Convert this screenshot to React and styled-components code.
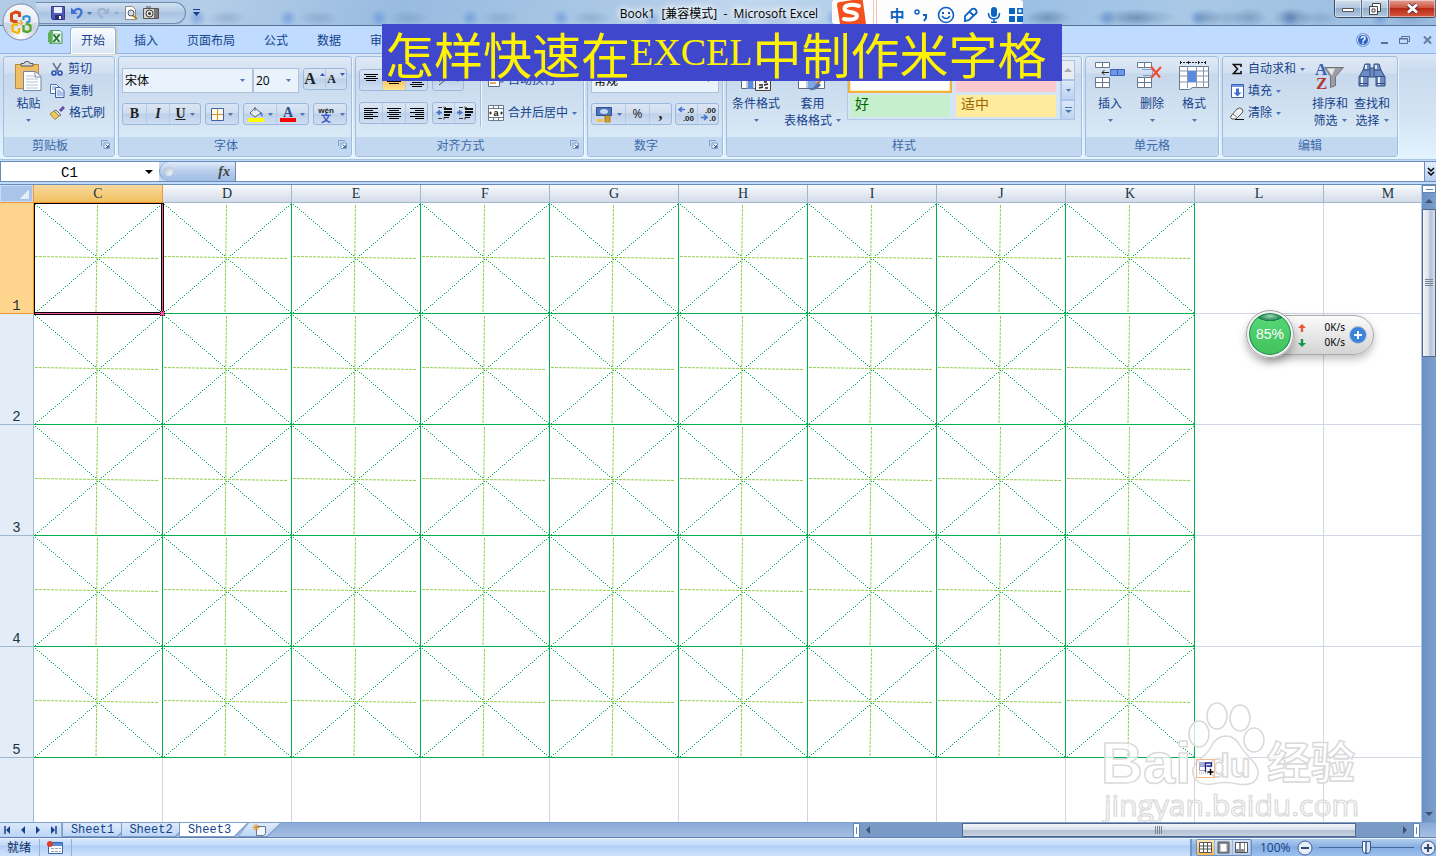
import React from "react";
import styled, { createGlobalStyle, css } from "styled-components";

const UI = `"Open Sans", "Noto Sans CJK SC", sans-serif`;
const MONO = `"Liberation Mono", "Noto Sans CJK SC", monospace`;
const INK = "#15428b";
const GREEN = "#00b050";

const Global = createGlobalStyle`
  * { box-sizing: border-box; }
  body { margin: 0; background: #fff; font: 12px/16px ${UI}; color: ${INK}; }
  button, input, select { font: inherit; color: inherit; margin: 0; }
  button { padding: 0; border: 0; background: none; cursor: default; white-space: nowrap; }
  svg { display: block; flex: none; }
`;

const Window = styled.div`
  position: relative;
  display: flex;
  flex-direction: column;
  height: 100vh;
  min-height: 480px;
  overflow: hidden;
  background: #bfdbff;
`;

/* ---------- title bar ---------- */
const TitleBar = styled.header`
  position: relative;
  display: flex;
  justify-content: center;
  height: 26px;
  flex: none;
  border-bottom: 1px solid #56708f;
  background:
    radial-gradient(ellipse 44px 9px at 79% 70%, rgba(70, 105, 145, 0.4), transparent),
    radial-gradient(ellipse 16px 9px at 84% 70%, rgba(70, 105, 145, 0.4), transparent),
    radial-gradient(ellipse 18px 10px at 87% 70%, rgba(70, 105, 145, 0.4), transparent),
    radial-gradient(ellipse 20px 10px at 90% 70%, rgba(60, 90, 130, 0.45), transparent),
    radial-gradient(ellipse 24px 9px at 73% 70%, rgba(70, 105, 145, 0.35), transparent),
    radial-gradient(circle 9px at 15px 18px, rgba(80, 135, 215, 0.5), transparent) 0 0 / 91px 26px repeat-x,
    radial-gradient(ellipse 20px 8px at 45px 18px, rgba(90, 125, 165, 0.3), transparent) 0 0 / 91px 26px repeat-x,
    linear-gradient(115deg, #b3cce6 0%, #a9c6e4 8%, #b5cde8 14%, #98bbe0 28%, #aac7e5 42%, #c0d7ee 52%, #9abfe4 70%, #a9c8e6 82%, #98bbdf 100%);
`;

const Title = styled.h1`
  margin: 0;
  padding: 5px 0 0 2px;
  font: 12px/17px ${UI};
  color: #000;
  white-space: pre;
  text-shadow: 0 0 6px #fff, 0 0 8px #fff, 0 0 10px #fff;
`;

const QuickAccess = styled.div`
  position: absolute;
  left: 36px;
  top: 2px;
  display: flex;
  align-items: center;
  gap: 5px;
  height: 22px;
  width: 150px;
  padding-left: 15px;
  border: 1px solid #6d8db4;
  border-left: 0;
  border-radius: 0 11px 11px 0;
  background: linear-gradient(#d3e1f1, #b4cae4 45%, #a9c3e2 50%, #bfd3ea);
`;

const QuickMore = styled.button`
  position: absolute;
  left: 193px;
  top: 9px;
`;

const OfficeOrb = styled.button`
  position: absolute;
  left: 2px;
  top: 3px;
  z-index: 3;
`;

const CaptionButtons = styled.div`
  position: absolute;
  right: -1px;
  top: -1px;
  display: flex;
  height: 19px;
  border: 1px solid #3b4d66;
  border-radius: 0 0 4px 4px;
  overflow: hidden;
`;

const CaptionButton = styled.button`
  display: flex;
  align-items: center;
  justify-content: center;
  width: ${(p) => (p.$close ? 47 : 27)}px;
  border-right: 1px solid #52678a;
  box-shadow: inset 0 0 0 1px rgba(255, 255, 255, 0.45);
  background: ${(p) =>
    p.$close
      ? "linear-gradient(#e0a196, #d0543f 45%, #b92a16 50%, #d4593c)"
      : "linear-gradient(#d0deec, #b2c8df 45%, #93aecd 50%, #b2cbe4)"};
`;

/* input method strip floating over the title bar */
const ImeBar = styled.div`
  position: absolute;
  left: calc(50% + 114px);
  top: 0;
  display: flex;
  align-items: center;
  gap: 8px;
  height: 24px;
  width: 191px;
  padding: 5px 0 0 4px;
  border-radius: 3px;
  background: #fdfdfe;
  color: #0a63c2;
`;

const ImeLogo = styled.div`
  margin: -4px 7px 0 0;
  padding-right: 5px;
  border-right: 1px solid #f6c4b6;
  box-shadow: 2px 0 0 #fff, 3px 0 0 #f6c4b6;
`;

const ImeMode = styled.button`
  font: bold 15px/16px ${UI};
  width: 16px;
`;

const Banner = styled.div`
  position: absolute;
  z-index: 5;
  left: calc(50% - 336px);
  top: 24px;
  display: flex;
  align-items: center;
  width: 680px;
  height: 57px;
  padding-left: 3px;
  overflow: hidden;
  background: #3f48cc;
  color: #fff200;
  font: 49px/53px "Noto Sans CJK SC", sans-serif;
  white-space: nowrap;
`;

const BannerLatin = styled.span`
  font: 38px/57px "Liberation Serif", serif;
`;

/* ---------- ribbon ---------- */
const TabStrip = styled.nav`
  position: relative;
  display: flex;
  flex: none;
  height: 27px;
  padding-left: 47px;
  background: #bfdbff;
`;

const TabIcon = styled.div`
  width: 17px;
  padding-top: 3px;
`;

const RibbonTab = styled.button`
  height: 27px;
  padding: ${(p) => (p.$active ? "0 10px" : "0 14px 0 15px")};
  margin: ${(p) => (p.$active ? "1px 3px 0 6px" : "1px 0 0")};
  line-height: 24px;
  ${(p) =>
    p.$active &&
    css`
      border: 1px solid #8db2e3;
      border-bottom: 0;
      border-radius: 4px 4px 0 0;
      background: linear-gradient(#fbfdff, #e4edf8 60%, #dae6f4);
      box-shadow: inset 0 0 0 1px #fff, 1px 0 2px #d9c27d;
      z-index: 1;
    `}
`;

const DocButtons = styled.div`
  display: flex;
  align-items: center;
  gap: 9px;
  margin-left: auto;
  padding-right: 1px;
`;

const Ribbon = styled.section`
  display: flex;
  flex: none;
  gap: 3px;
  height: 107px;
  padding: 2px 3px 4px;
  border-top: 1px solid #8db2e3;
  border-bottom: 1px solid #a7c4e2;
  background: linear-gradient(#dbe7f6, #c9daee 16%, #d3e2f3 55%, #e3f4ff);
`;

const GroupBox = styled.section`
  display: flex;
  flex-direction: column;
  flex: none;
  width: ${(p) => p.$w}px;
  height: 101px;
  border: 1px solid #9ebfdf;
  border-radius: 3px;
  box-shadow: 1px 1px 0 #eef6ff;
  background: linear-gradient(#dfe9f5, #d3e0f1 16%, #c7d8ed 17%, #d8e8f5 80%);
`;

const GroupBody = styled.div`
  display: flex;
  flex: 1;
  padding: 0 3px;
`;

const GroupLabel = styled.footer`
  position: relative;
  height: 19px;
  flex: none;
  line-height: 18px;
  text-align: center;
  padding-right: ${(p) => (p.$launch ? 18 : 0)}px;
  color: #3e6aaa;
  background: #c1d8f0;
`;

const Launcher = styled.button`
  position: absolute;
  right: 4px;
  top: 3px;
`;

const Stack = styled.div`
  display: flex;
  flex-direction: column;
  gap: ${(p) => p.$gap || 0}px;
  padding-top: ${(p) => p.$top || 0}px;
`;

const Line = styled.div`
  display: flex;
  gap: ${(p) => (p.$gap === undefined ? 4 : p.$gap)}px;
`;

const BigButton = styled.button`
  display: flex;
  flex-direction: column;
  align-items: center;
  width: ${(p) => p.$w || 42}px;
  padding-top: 4px;
  line-height: 17px;
`;

const BigIcon = styled.span`
  display: flex;
  height: 34px;
`;

const CaretSlot = styled.span`
  display: flex;
  align-items: center;
  height: 17px;
`;

const TextLine = styled.span`
  display: flex;
  align-items: center;
  gap: 4px;
`;

const SmallButton = styled.button`
  display: flex;
  align-items: center;
  gap: 4px;
  height: 22px;
`;

const IconSlot = styled.span`
  display: flex;
  justify-content: center;
  width: 14px;
`;

const EditStack = styled(Stack)`
  width: 83px;
  padding: 1px 0 0 4px;
`;

const ClipStack = styled(Stack)`
  padding-top: 1px;
`;

const ButtonSet = styled.div`
  display: flex;
  flex: none;
  height: 22px;
  border: 1px solid #9bb7db;
  border-radius: 3px;
  overflow: hidden;
  background: linear-gradient(#dbe6f4, #cfddee 45%, #bdd0e9 50%, #cfdff2);
`;

const SetButton = styled.button`
  display: flex;
  align-items: center;
  justify-content: center;
  gap: 4px;
  width: ${(p) => p.$w || 23}px;
  color: #222;
  font: ${(p) => p.$font || "inherit"};
  border-left: ${(p) => (p.$first ? 0 : 1)}px solid #b4c9e4;
  ${(p) => p.$on && "background: linear-gradient(#fbdb9d, #ffc15c 50%, #ffe68d);"}
`;

const ComboBox = styled.label`
  display: grid;
  grid-template-columns: 1fr 12px;
  align-items: center;
  width: ${(p) => p.$w}px;
  height: 25px;
  border: 1px solid #abc1de;
  background: #eaf2fb;

  svg { grid-area: 1 / 2; pointer-events: none; }
`;

const ComboSelect = styled.select`
  grid-area: 1 / 1 / 2 / 3;
  appearance: none;
  height: 23px;
  padding: 0 2px;
  border: 0;
  color: #000;
  background: none;
`;

const VRule = styled.i`
  width: 2px;
  height: 60px;
  margin: 10px 6px 0 4px;
  border-left: 1px solid #a3bfe0;
  border-right: 1px solid #eef5fd;
`;

const Gallery = styled.div`
  display: grid;
  grid-template-columns: 104px 104px;
  grid-template-rows: 31px 24px;
  gap: 1px 2px;
  width: 214px;
  height: 60px;
  margin: 3px 0 0 4px;
  padding: 1px 0;
  border: 1px solid #b0c9e8;
  background: #d6e5f5;
`;

const StyleCell = styled.button`
  margin: ${(p) => (p.$on ? "0" : "1px 2px")};
  padding: 0 5px 4px;
  text-align: left;
  font-size: 14px;
  line-height: 18px;
  color: ${(p) => p.$fg};
  background: ${(p) => p.$bg};
  ${(p) => p.$on && "border: 2px solid #f0b23c; box-shadow: inset 0 0 0 1px #fff0c0;"}
`;

const GallerySpin = styled.div`
  display: flex;
  flex-direction: column;
  width: 14px;
  height: 60px;
  margin-top: 3px;
`;

const SpinButton = styled.button`
  flex: 1;
  display: flex;
  align-items: center;
  justify-content: center;
  border: 1px solid #a9c4e8;
  background: ${(p) => (p.$off ? "#e9edf2" : "linear-gradient(#dbe8f8, #bdd3f0)")};
`;

/* ---------- formula bar ---------- */
const FormulaBar = styled.div`
  display: flex;
  flex: none;
  height: 21px;
  margin-top: 1px;
  border-top: 1px solid #6a8db8;
  border-bottom: 1px solid #6a8db8;
  background: #c9dcf4;
`;

const NameBox = styled.div`
  display: flex;
  align-items: center;
  width: 159px;
  border-left: 1px solid #6a8db8;
  background: #fff;
`;

const NameInput = styled.input`
  width: 137px;
  height: 19px;
  margin-right: 7px;
  padding: 2px 0 0;
  border: 0;
  text-align: center;
  color: #000;
  background: none;
  font: 14px/16px ${MONO};
`;

const FxPill = styled.button`
  display: flex;
  align-items: center;
  justify-content: space-between;
  width: 77px;
  padding: 0 5px 0 4px;
  border-right: 1px solid #6a8db8;
  border-left: 1px solid #7f9fc8;
  border-radius: 10px 0 0 10px;
  background: linear-gradient(#dfeafa, #b7cdeb 50%, #9fbde4);
  color: #444;
  font: italic bold 14px/17px "Liberation Serif", serif;
`;

const FxDot = styled.i`
  width: 9px;
  height: 9px;
  border-radius: 50%;
  background: radial-gradient(circle at 70% 70%, #eef2f7, #a9b8cd);
`;

const FormulaInput = styled.input`
  flex: 1;
  min-width: 0;
  border: 0;
  background: #fff;
`;

const ExpandButton = styled.button`
  display: flex;
  align-items: center;
  justify-content: center;
  width: 12px;
  border-left: 1px solid #6a8db8;
  background: linear-gradient(#e4eefb, #b4cdee);
`;

/* ---------- sheet ---------- */
const Workbook = styled.main`
  display: flex;
  flex: 1;
  min-height: 0;
  margin-top: 2px;
  border-top: 1px solid #6a8db8;
`;

const SheetPane = styled.div`
  position: relative;
  flex: 1;
  min-width: 0;
  overflow: hidden;
  background: #fff;
`;

const Sheet = styled.table`
  table-layout: fixed;
  width: 1453px;
  border-spacing: 0;
  color: #16353f;
`;

const Corner = styled.th`
  width: 34px;
  height: 18px;
  padding: 0;
  border-right: 1px solid #f29536;
  border-bottom: 1px solid #f29536;
  background: linear-gradient(135deg, transparent 52%, #e6ecf4 53%) no-repeat 19px 4px / 10px 10px, #a9c4e9;
  box-shadow: inset 0 0 0 1px #c8dcf5;
`;

const ColHead = styled.th`
  height: 18px;
  padding: 0;
  font: 14px/17px "Liberation Serif", serif;
  border-right: 1px solid ${(p) => (p.$on ? "#f29536" : "#9eb6ce")};
  border-bottom: 1px solid ${(p) => (p.$on ? "#f29536" : "#9eb6ce")};
  background: ${(p) => (p.$on ? "linear-gradient(#f9d99f, #f1c15f)" : "linear-gradient(#f9fcfd, #e6ebf3 50%, #d3dbe9)")};
`;

const RowHead = styled.th`
  height: 111px;
  padding: 0;
  vertical-align: bottom;
  font: 14px/14px ${MONO};
  border-right: 1px solid ${(p) => (p.$on ? "#f29536" : "#9eb6ce")};
  border-bottom: 1px solid ${(p) => (p.$on ? "#f29536" : "#9eb6ce")};
  background: ${(p) => (p.$on ? "#ffd58d" : "#e4ecf7")};
`;

const Cell = styled.td`
  position: relative;
  height: 111px;
  padding: 0;
  border-right: 1px solid ${(p) => (p.$ruled ? GREEN : "#d0d7e5")};
  border-bottom: 1px solid ${(p) => (p.$ruled ? GREEN : "#d0d7e5")};
`;

const Selection = styled.div`
  position: absolute;
  z-index: 2;
  inset: 0 -2px -2px 0;
  border: solid #000;
  border-width: 1px 3px 3px 1px;

  &::before {
    content: "";
    position: absolute;
    inset: 0 -2px -2px 0;
    border: solid #ff4fa0;
    border-width: 0 1px 1px 0;
  }

  &::after {
    content: "";
    position: absolute;
    right: -4px;
    bottom: -4px;
    width: 5px;
    height: 5px;
    background: #ff4fa0;
    outline: 1px dotted #000;
    outline-offset: -1px;
  }
`;

const FillOptions = styled.button`
  position: absolute;
  z-index: 4;
  left: calc(100% + 2px);
  top: calc(100% + 2px);
  border: 1px solid #f3b98a;
`;

/* scroll bars */
const VScroll = styled.div`
  display: flex;
  flex-direction: column;
  align-items: center;
  width: 15px;
  flex: none;
  border-left: 1px solid #a9c6ec;
  background: linear-gradient(90deg, #6c90c4, #7d9fca);
`;

const SplitBox = styled.i`
  flex: none;
  width: ${(p) => (p.$v ? 14 : 7)}px;
  height: ${(p) => (p.$v ? 8 : 15)}px;
  border: 1px solid #5f86b8;
  background: linear-gradient(#5f86b8, #5f86b8) no-repeat center / ${(p) => (p.$v ? "7px 1px" : "1px 7px")}, #fff;
`;

const ArrowButton = styled.button`
  display: flex;
  align-items: center;
  justify-content: center;
  width: 16px;
  height: 16px;
  flex: none;
  ${(p) => p.$end && "margin-top: auto;"}
`;

const VThumb = styled.button`
  display: flex;
  align-items: center;
  justify-content: center;
  width: 14px;
  height: 148px;
  border: 1px solid #52658a;
  border-radius: 1px;
  background: linear-gradient(90deg, #f3f6fa, #dbe2ec 45%, #b4c2d5 60%, #d5deea);
`;

const BottomBar = styled.div`
  display: flex;
  flex: none;
  height: 16px;
  border-top: 1px solid #7fa0cc;
  border-bottom: 1px solid #5b7fb4;
  background: linear-gradient(#8aabd8, #a5bfe2);
`;

const SheetNav = styled.div`
  display: flex;
  align-items: center;
  justify-content: space-around;
  width: 62px;
  border-right: 1px solid #8ca9d0;
  background: linear-gradient(#dbe9fb, #bcd4f3);
`;

const SheetTab = styled.button`
  position: relative;
  width: ${(p) => p.$w}px;
  margin-right: -10px;
  padding-right: ${(p) => (p.$icon ? 0 : 8)}px;
  font: 12px/15px ${MONO};
  background: #7f9dcb;
  z-index: ${(p) => (p.$active ? 2 : 1)};
  clip-path: ${(p) =>
    p.$icon
      ? "polygon(10px 0, 100% 0, calc(100% - 13px) 100%, 0 100%)"
      : "polygon(0 0, 100% 0, calc(100% - 13px) 100%, 0 100%)"};

  &::before {
    content: "";
    position: absolute;
    z-index: -1;
    inset: 0 1px 1px;
    background: ${(p) => (p.$active ? "#fff" : "linear-gradient(#dfebfb, #bcd5f5)")};
    clip-path: inherit;
  }

  svg { margin: 0 auto; }
`;

const HScroll = styled.div`
  display: flex;
  align-items: center;
  width: 39.5%;
  margin-left: auto;
  margin-right: 16px;
  background: #7a9ac6;
`;

const Track = styled.div`
  flex: 1;
  display: flex;
  justify-content: flex-end;
  padding-right: 41px;
`;

const HThumb = styled.button`
  display: flex;
  align-items: center;
  justify-content: center;
  width: 82%;
  height: 14px;
  border: 1px solid #52658a;
  background: linear-gradient(#f1f4f8, #dce3ec 45%, #b3c1d3 55%, #c9d4e3);
`;

/* ---------- status bar ---------- */
const StatusBar = styled.footer`
  display: flex;
  flex: none;
  height: 18px;
  line-height: 18px;
  border-top: 1px solid #eaf3ff;
  background: linear-gradient(#d5e5fb, #c5dcf9 35%, #b0cff5 40%, #cfe2fb);
`;

const StatusItem = styled.span`
  display: flex;
  align-items: center;
  padding: 0 8px 0 7px;
  border-right: 1px solid #8fb0de;
  color: #0c2b5e;
`;

const StatusRight = styled.div`
  display: flex;
  align-items: center;
  gap: 6px;
  width: 246px;
  margin-left: auto;
  padding-left: 4px;
  border-left: 2px solid #7196c9;
  background: linear-gradient(#b2cdf0, #86aee2 50%, #9ac0ee);
`;

const ViewButtons = styled.div`
  display: flex;
  border: 1px solid #6d90c1;
  border-radius: 2px;
  margin-right: 2px;
`;

const ViewButton = styled.button`
  padding: 1px 2px;
  border-right: 1px solid #9ab6da;
  background: ${(p) => (p.$on ? "linear-gradient(#fde9b5, #f6b84d)" : "linear-gradient(#d2e1f4, #b3cbeb)")};
`;

const ZoomSlider = styled.input`
  appearance: none;
  flex: 1;
  min-width: 0;
  height: 16px;
  margin: 0;
  background: linear-gradient(#45699c, #45699c) no-repeat center / 100% 1px;

  &::-webkit-slider-thumb {
    appearance: none;
    width: 9px;
    height: 13px;
    border: 1px solid #39598a;
    border-radius: 1px 1px 5px 5px;
    background: linear-gradient(90deg, #fff 35%, #5b7db0 35% 60%, #d6e2f2 60%);
  }
`;

/* ---------- floating pieces ---------- */
const SpeedBall = styled.aside`
  position: absolute;
  z-index: 4;
  right: 62px;
  top: 310px;
  display: flex;
  align-items: center;
  width: 128px;
  height: 50px;
`;

const Pill = styled.div`
  display: flex;
  align-items: center;
  justify-content: flex-end;
  gap: 4px;
  flex: 1;
  height: 40px;
  margin-left: 20px;
  padding-right: 6px;
  border: 1px solid #aaa;
  border-radius: 0 20px 20px 0;
  background: linear-gradient(#fbfbfb, #d4d4d4);
  box-shadow: 0 4px 8px rgba(0, 0, 0, 0.25);
`;

const Ball = styled.div`
  position: absolute;
  left: 0;
  top: 0;
  width: 48px;
  height: 48px;
  border: 3px solid #f2f2f2;
  border-radius: 50%;
  outline: 1px solid #a5a5a5;
  outline-offset: -1px;
  background: radial-gradient(ellipse 18px 7px at 50% 3px, #9fd9b0, #127d4c 70%, transparent 72%),
    linear-gradient(#58d878, #41c25c);
  box-shadow: 0 5px 8px rgba(0, 0, 0, 0.3), inset 0 0 0 1px #14824d;
  color: #fff;
  font: 14px/42px "Liberation Sans", sans-serif;
  text-align: center;
`;

const Rates = styled.div`
  width: 47px;
  color: #000;
  font: 10px/15px "Noto Sans", sans-serif;
`;

const Rate = styled.div`
  display: flex;
  align-items: center;
  justify-content: space-between;
`;

const Watermark = styled.svg`
  position: absolute;
  z-index: 3;
  right: 0;
  bottom: 0;
  pointer-events: none;
`;

/* ---------- icons ---------- */
const Caret = ({ color = "#4d76b3", w = 5 }) => (
  <svg width={w} height={w > 6 ? 4 : 3} viewBox="0 0 6 3" preserveAspectRatio="none" aria-hidden="true"><path d="M0 0h6L3 3z" fill={color} /></svg>
);

const Svg = ({ w, h = w, vb, children }) => (
  <svg width={w} height={h} viewBox={vb || `0 0 ${w} ${h}`} fill="none" aria-hidden="true">{children}</svg>
);

const Orb = () => (
  <Svg w={38}>
    <defs>
      <radialGradient id="orb" cx=".5" cy=".9" r=".9">
        <stop offset="0" stopColor="#fff" /><stop offset=".5" stopColor="#c9d2e0" /><stop offset="1" stopColor="#f7f9fc" />
      </radialGradient>
    </defs>
    <circle cx="19" cy="19" r="18" fill="url(#orb)" stroke="#7d8da6" />
    <path d="M2 19a17 17 0 0 1 34 0q-17 5-34 0z" fill="#fff" opacity=".45" />
    <g strokeWidth="3" strokeLinejoin="round">
      <path d="M17.500 14V10l-4-1-4 2v6.500l3 1h3" stroke="#d9480f" />
      <path d="M21.500 17v-3l3-1 3 1v4.500l-3 1" stroke="#2c8fd6" strokeWidth="2.200" />
      <path d="M16 21.500h-4.500l-1 1.500v5l5 2 1.500-1V25" stroke="#f4b400" strokeWidth="2.400" />
      <path d="M21.500 22v6l4 1 3-1.500v-5l-3-1.500h-2" stroke="#5aa62c" strokeWidth="2.400" />
    </g>
    <path d="M19 17v6M16 20h6" stroke="#f0a020" strokeWidth="1.500" strokeDasharray="2 1" />
  </Svg>
);

const Save = () => (
  <Svg w={14}><path d="M.5.5h13v13h-12l-1-1z" fill="#5158b8" stroke="#343b94" /><path d="M3 1h8v6H3z" fill="#e9f0fb" /><path d="M4 9h7v4.500H4z" fill="#2a2f6e" /><path d="M8 10h2v3H8z" fill="#fff" /></Svg>
);
const Undo = ({ color, flip }) => (
  <Svg w={13} h={14}>
    <g transform={flip ? "matrix(-1 0 0 1 13 0)" : undefined}>
      <path d="M1 1.500v6.500h6.500z" fill={color} />
      <path d="M4 5q2.500-2.800 5.500-2 3 1.500 1.500 5-1 2.500-4 4" stroke={color} strokeWidth="2.200" />
    </g>
  </Svg>
);
const Preview = () => (
  <Svg w={14}><path d="M1.500.5h7l3 3v10h-10z" fill="#fff" stroke="#888" /><circle cx="7" cy="7" r="3" fill="#cfe0f2" stroke="#555" /><path d="M9 9.500l4 3.500" stroke="#b9801f" strokeWidth="2" /></Svg>
);
const Camera = () => (
  <Svg w={16} h={14}><path d="M.5 2.500h15v10H.5z" fill="#d8d4cc" stroke="#555" /><path d="M11 3h4v9h-4z" fill="#777" /><circle cx="6.500" cy="7.500" r="3.500" fill="#eee" stroke="#333" /><circle cx="6.500" cy="7.500" r="1.500" fill="#333" /><path d="M3 1h5" stroke="#555" /></Svg>
);
const ExcelMark = () => (
  <Svg w={16}><path d="M3 1.500h10l2 2v11H3z" fill="#fff" stroke="#4f9a5d" /><path d="M1 4L6 1v14L1 13z" fill="#5fae5b" /><path d="M5.500 5h9v9h-9z" fill="#eaf5e9" stroke="#8fc18f" /><path d="M6.500 5.500l6 7.500M12.500 5.500l-6 7.500" stroke="#1d7a35" strokeWidth="2" /></Svg>
);
const Clipboard = () => (
  <Svg w={27} h={30}><path d="M.5 3.500h23v24H.5z" fill="#efbd62" stroke="#b88938" /><path d="M6 5V2.500h3q0-2 3-2t3 2h3V5z" fill="#d7d9dc" stroke="#555" /><path d="M8.500 10.500h12l5.500 5v14H8.500z" fill="#fff" stroke="#6f86a6" /><path d="M20 11v5h6" stroke="#6f86a6" /><path d="M11 15h8M11 18h12M11 21h12M11 24h12M11 27h12" stroke="#b2c1d8" /></Svg>
);
const Cut = () => (
  <Svg w={14} h={14}><path d="M3 1l5 8M11 1L6 9" stroke="#6b7a90" strokeWidth="1.600" /><circle cx="4" cy="11" r="2" stroke="#3358b5" strokeWidth="1.700" /><circle cx="10" cy="11" r="2" stroke="#3358b5" strokeWidth="1.700" /></Svg>
);
const Copy = () => (
  <Svg w={15} h={14}><path d="M.5.5h6l3 3v6h-9z" fill="#fff" stroke="#4a70ad" /><path d="M5.500 3.500h5l3.500 3v7H5.500z" fill="#eaf2ff" stroke="#3b63a6" /><path d="M2 3h4M2 5h3M7 7h4M7 9h6M7 11h6" stroke="#6d95d2" /></Svg>
);
const Brush = () => (
  <Svg w={15} h={14}><path d="M10 5l4-4" stroke="#6a4ba0" strokeWidth="3" /><path d="M6 4l5 5-2 1-5-5z" fill="#d8dde8" stroke="#667" /><path d="M4 5l5 5-4 3.500L0 8z" fill="#ecc860" stroke="#a9822b" /></Svg>
);
const Launch = () => (
  <Svg w={9}><path d="M.5 6V.5H7" stroke="#7f9fc9" /><path d="M3 3h5.500v5.500H3z" fill="#e8f1fc" stroke="#7f9fc9" /><path d="M4.500 4.500L7 7M7.500 5v2.500H5" stroke="#45699c" /></Svg>
);
const Borders = () => (
  <Svg w={13}><path d="M.5.5h12v12H.5z" fill="#fff8e6" stroke="#3b63a6" /><path d="M6.500 1v11M1 6.500h11" stroke="#d59432" /></Svg>
);
const Bucket = () => (
  <Svg w={16}><path d="M2 7l5-5 6 5-6 4z" fill="#e8edf4" stroke="#56677f" /><path d="M7 5V1" stroke="#56677f" /><path d="M12 6q3 0 2.500 5Q12 9 12 6z" fill="#3f72c4" /><path d="M0 12h16v4H0z" fill="#ff0" /></Svg>
);
const FontColor = () => (
  <Svg w={16}><text x="8" y="11" textAnchor="middle" fontFamily="Liberation Serif" fontWeight="bold" fontSize="14" fill="#2f4f8f">A</text><path d="M0 12h16v4H0z" fill="#f00" /></Svg>
);
const Pinyin = () => (
  <Svg w={20} h={20}><text x="10" y="9" textAnchor="middle" fontFamily="Liberation Sans" fontWeight="bold" fontSize="8" fill="#222">wén</text><text x="10" y="18" textAnchor="middle" fontFamily="Noto Sans CJK SC" fontWeight="bold" fontSize="10" fill="#3c55c8">文</text></Svg>
);

const BARS = {
  left: [[0, 14], [0, 9]],
  center: [[0, 14], [2, 10]],
  right: [[0, 14], [5, 9]],
};
const AlignLines = ({ kind = "center", rows = 6, top = 1 }) => (
  <Svg w={14} h={13}>
    {Array.from({ length: rows }, (_, i) => {
      const [x, w] = BARS[kind][i % 2];
      return <rect key={i} x={x} y={top + i * 2} width={w} height="1" fill="#000" />;
    })}
  </Svg>
);
const Indent = ({ out }) => (
  <Svg w={16} h={14}><path d={out ? "M0 6.500l4-3v2h2v2H4v2z" : "M6 6.500l-4-3v2H0v2h2v2z"} fill="#4b74c9" /><path d="M2 1.500h4M2 12.500h4M9 1.500h1M8 .5v2M8 11.500v2" stroke="#333" /><path d="M8 3h8M8 6h8M8 9h6" stroke="#111" strokeWidth="2" /><path d="M8 11.500h5" stroke="#111" /></Svg>
);
const Orient = () => (
  <Svg w={14}><path d="M2 12L12 4M12 4l-4 0M12 4l-1 4" stroke="#555" /><path d="M2 8l6-6" stroke="#333" strokeWidth="2" /></Svg>
);
const Wrap = () => (
  <Svg w={16}><path d="M.5.5h11v14H.5z" fill="#fff" stroke="#5a6f90" /><path d="M2 4h8M2 7h8M2 11h6" stroke="#d59432" strokeWidth="1.500" /><path d="M15 6v4h-4" stroke="#3358b5" /></Svg>
);
const Merge = () => (
  <Svg w={16}><path d="M.5.5h15v15H.5z" fill="#fff" stroke="#68788f" /><path d="M0 3.500h16M0 12.500h16M5.500 0v3M10.500 0v3M5.500 13v3M10.500 13v3" stroke="#68788f" /><path d="M1 8h3M12 8h3M2.500 6.500v3M13.500 6.500v3" stroke="#333" /><text x="8" y="11" textAnchor="middle" fontFamily="Liberation Sans" fontWeight="bold" fontSize="9" fill="#111">a</text></Svg>
);
const Currency = () => (
  <Svg w={17}><path d="M.5 1.500h15v8H.5z" fill="#4d74bd" stroke="#2f4f8f" /><ellipse cx="8" cy="5.500" rx="4" ry="2.500" fill="#c5d6f2" /><path d="M9 16v-6h5v6z" fill="#f3c24b" stroke="#a87417" /><path d="M9 12h5M9 14h5M1 14.500h6" stroke="#a87417" /><path d="M1 13h6v3H1z" fill="#f3c24b" /></Svg>
);
const Decimals = ({ top, bottom, dir }) => (
  <Svg w={19} h={20}>
    <g fontFamily="Liberation Sans" fontWeight="bold" fontSize="8" fill="#222">
      <text x="17" y="9" textAnchor="end">{top}</text><text x="17" y="17" textAnchor="end">{bottom}</text>
    </g>
    <path d={dir === "l" ? "M8 5.500H2M5 3L2 5.500 5 8" : "M2 13.500h6M5 11l3 2.500L5 16"} stroke="#3f6fd0" strokeWidth="1.500" />
  </Svg>
);
const CondFormat = () => (
  <Svg w={30} h={30}><path d="M.5.5h21v27H.5z" fill="#fff" stroke="#5d6c84" /><path d="M6 1v27M12 1v27" stroke="#8a97ab" /><path d="M7 10h5v18H7z" fill="#5b8be0" /><path d="M14.500 14.500h15v15h-15z" fill="#f4f4f4" stroke="#444" /><path d="M18 20l3-2 3 2M26 21h-3M18 24h4M23 24l4-1M18 27l4-1M24 27h3" stroke="#222" strokeWidth="1.300" /></Svg>
);
const TableFormat = () => (
  <Svg w={30} h={30}><path d="M.5.5h26v27H.5z" fill="#fff" stroke="#5d6c84" /><path d="M1 8h26M1 16h26M9 1v26M18 1v26" stroke="#8a97ab" /><path d="M10 9h8v18h-8z" fill="#7ea6e8" /><path d="M28 13L18 24" stroke="#c98a42" strokeWidth="3" /><path d="M20 21l3 3q-4 6-12 5 6-3 9-8z" fill="#5573ad" /></Svg>
);
const cellsBase = "M.5 1.500h14v5H.5zM.5 16.500h14v10H.5zM7.500 2v4M7.500 17v10M.5 21.500h14";
const InsertCells = () => (
  <Svg w={30} h={30}><path d={cellsBase} fill="#fff" stroke="#68788f" /><path d="M15.500 8.500h14v6h-14z" fill="#6e97e6" stroke="#3b63b8" /><path d="M22.500 9v5" stroke="#3b63b8" /><path d="M14 11.500H7M9.500 9L7 11.500 9.500 14" stroke="#222" /></Svg>
);
const DeleteCells = () => (
  <Svg w={30} h={30}><path d={cellsBase} fill="#fff" stroke="#68788f" /><path d="M5.500 8.500h10v6h-10" stroke="#3b63b8" strokeDasharray="1 1" /><path d="M14 5.500l9 11M24 6L14 17" stroke="#f04a2c" strokeWidth="2" /></Svg>
);
const FormatCells = () => (
  <Svg w={32} h={30}><path d="M2 1.500h26" stroke="#222" strokeDasharray="2 1" /><path d="M2.500 0v3M10.500 0v3M20.500 0v3M27.500 0v3" stroke="#222" /><path d="M1.500 5.500h29v21h-16l-3 2h-10z" fill="#fff" stroke="#68788f" /><path d="M1.500 10h29M1.500 21h29M9.500 5v22M18.500 5v22M25.500 5v22M1.500 15h8M18 15h12" stroke="#8a97ab" /><path d="M10 10h8v11h-8z" fill="#5b8be0" /></Svg>
);
const Fill = () => (
  <Svg w={13} h={14}><path d="M.5.5h12v13H.5z" fill="#fff" stroke="#3b63a6" /><path d="M1 1h11v2H1z" fill="#6e97e6" /><path d="M5 4.500h3v4h2.500L6.500 12.500 2.500 8.500H5z" fill="#3f6fd0" /></Svg>
);
const Eraser = () => (
  <Svg w={14} h={13}><path d="M1 9l6-7q3-2 5 0t0 4l-6 6H2q-2-1-1-3z" fill="#f3f4f6" stroke="#555" /><path d="M3 7l5 4" stroke="#777" /><path d="M5 12.500h9" stroke="#111" /></Svg>
);
const Sigma = () => (
  <Svg w={12}><path d="M10 4V1.500H2.500L6.500 6l-4 4.500H10V8" stroke="#111" strokeWidth="1.600" /></Svg>
);
const SortFilter = () => (
  <Svg w={30} h={32}>
    <g fontFamily="Liberation Serif" fontWeight="bold" fontSize="17"><text x="0" y="14" fill="#3c5fb0">A</text><text x="1" y="28" fill="#b03a2e">Z</text></g>
    <path d="M9.500 6.500h19l-8 9v9l-5 2v-11z" fill="#9c9ea3" stroke="#707276" /><path d="M12 7.500h8l-3 7" fill="#e6e6e8" />
  </Svg>
);
const Binoculars = () => (
  <Svg w={28} h={30}><path d="M7 3h5v4h4V3h5l2 6 4 7v9h-9v-9h-8v9H1v-9l4-7z" fill="#6d8cc6" stroke="#34517f" /><path d="M5 9h7M16 9h7M12 7v8M16 7v8" stroke="#34517f" /><path d="M8 4v4M18 4v4" stroke="#dfe8f6" strokeWidth="2" /><path d="M4 16v8M21 16v8" stroke="#eaf1fb" strokeWidth="2" /><path d="M1 15.500h10M17 15.500h10M1 22.500h9M18 22.500h9" stroke="#34517f" /></Svg>
);
const Plus = () => (
  <Svg w={18}><circle cx="9" cy="9" r="8.500" fill="#3c83dc" stroke="#c4c8cc" /><path d="M9 5v8M5 9h8" stroke="#fff" strokeWidth="2" /></Svg>
);
const ZoomKnob = ({ plus }) => (
  <Svg w={16}><circle cx="8" cy="8" r="7" fill="#e5eefa" stroke="#45608c" /><path d={plus ? "M4 8h8M8 4v8" : "M4 8h8"} stroke="#33496d" strokeWidth="2" /></Svg>
);
const SogouLogo = () => (
  <Svg w={32} h={26}><path d="M1 5q0-3 3-3L23-1q4-1 4 3l3 22H4z" fill="#f4511e" /><path d="M23 6q-10-3-14 1-2 4 5 5t7 4q-1 5-13 3" stroke="#fff" strokeWidth="4" strokeLinecap="round" /></Svg>
);

const Arrow = ({ dir, bar, color = "#15428b" }) => {
  const d = { l: "M6 0v8L2 4z", r: "M2 0v8l4-4z", u: "M0 6h8L4 2z", d: "M0 2h8L4 6z" }[dir];
  return (
    <Svg w={8}><path d={d} fill={color} />{bar && <path d={bar === "l" ? "M1 0v8" : "M7 0v8"} stroke={color} strokeWidth="1.500" />}</Svg>
  );
};

/* one practice square: dotted diagonals and a slightly tilted dashed cross */
const dots = (rising) => {
  let d = "";
  for (let x = 1; x < 128; x += 2) {
    const y = Math.round((x * 110) / 128);
    d += `M${x} ${(rising ? 110 - y : y) + 0.5}h1`;
  }
  return d;
};
const DIAGONALS = dots(false) + dots(true);
const RiceGrid = () => (
  <Svg w={128} h={110}>
    <path d={DIAGONALS} stroke={GREEN} shapeRendering="crispEdges" />
    <path d="M1 53.500L125 55.500M63.500 2L62 110" stroke="#92d050" strokeDasharray="3 1" />
  </Svg>
);

/* ---------- composed parts ---------- */
const Group = ({ label, w, launch, children }) => (
  <GroupBox $w={w} aria-label={label}>
    <GroupBody>{children}</GroupBody>
    <GroupLabel $launch={launch}>
      {label}
      {launch && <Launcher aria-label={`${label}设置`}><Launch /></Launcher>}
    </GroupLabel>
  </GroupBox>
);

const Big = ({ icon, lines, w }) => (
  <BigButton $w={w}>
    <BigIcon>{icon}</BigIcon>
    <span>{lines[0]}</span>
    {lines[1] ? <TextLine>{lines[1]}<Caret /></TextLine> : <CaretSlot><Caret /></CaretSlot>}
  </BigButton>
);

const Combo = ({ w, label, value }) => (
  <ComboBox $w={w}>
    <ComboSelect aria-label={label}><option>{value}</option></ComboSelect>
    <Caret />
  </ComboBox>
);

const COLUMNS = ["C", "D", "E", "F", "G", "H", "I", "J", "K", "L", "M"];
const ROWS = ["1", "2", "3", "4", "5", ""];
const TABS = ["开始", "插入", "页面布局", "公式", "数据", "审阅"];

export default function App() {
  return (
    <Window>
      <Global />
      <TitleBar>
        <OfficeOrb aria-label="Office 按钮"><Orb /></OfficeOrb>
        <QuickAccess>
          <button aria-label="保存"><Save /></button>
          <SmallButton aria-label="撤消"><Undo color="#3f6fd0" /><Caret /></SmallButton>
          <SmallButton aria-label="恢复"><Undo flip color="#9db3cf" /><Caret color="#8fa6c4" /></SmallButton>
          <button aria-label="打印预览"><Preview /></button>
          <button aria-label="照相机"><Camera /></button>
        </QuickAccess>
        <QuickMore aria-label="自定义"><Svg w={7} h={8}><path d="M0 .5h7" stroke={INK} /><path d="M0 3h7L3.500 7z" fill={INK} /></Svg></QuickMore>
        <Title>{"Book1  [兼容模式]  -  Microsoft Excel"}</Title>
        <ImeBar>
          <ImeLogo><SogouLogo /></ImeLogo>
          <ImeMode>中</ImeMode>
          <Svg w={16}><circle cx="4" cy="5" r="2" stroke="currentColor" strokeWidth="1.500" /><path d="M10 8h3v3l-2 3" stroke="currentColor" strokeWidth="2" /></Svg>
          <Svg w={18}><circle cx="9" cy="9" r="7.500" stroke="currentColor" strokeWidth="1.600" /><path d="M5 10q4 5 8 0" stroke="currentColor" strokeWidth="1.500" /><path d="M6 6v2M12 6v2" stroke="currentColor" strokeWidth="2" /></Svg>
          <Svg w={16}><path d="M2 14v-5l7-7q2-1 3.500.5T13.500 6L6 13zM7 5l4 4" stroke="currentColor" strokeWidth="1.800" /></Svg>
          <Svg w={14} h={16}><rect x="4" y="0" width="6" height="10" rx="3" fill="currentColor" /><path d="M1.500 6q0 6 5.500 6t5.500-6M7 12v3M4 15.200h6" stroke="currentColor" strokeWidth="1.600" /></Svg>
          <Svg w={14}><path d="M0 0h6v6H0zM0 8h6v6H0zM8 8h6v6H8z" fill="currentColor" /><path d="M8.800.8h4.400v4.400H8.800z" stroke="currentColor" strokeWidth="1.500" /></Svg>
        </ImeBar>
        <CaptionButtons>
          <CaptionButton aria-label="最小化"><Svg w={12} h={8}><path d="M.5 3.500h11v3H.5z" fill="#fff" stroke="#555" /></Svg></CaptionButton>
          <CaptionButton aria-label="还原"><Svg w={12}><path d="M3.500.5h8v8h-8z" fill="#fff" stroke="#444" /><path d="M.5 3.500h8v8h-8z" fill="#fff" stroke="#444" /><path d="M3 6h3v3H3z" stroke="#444" /></Svg></CaptionButton>
          <CaptionButton $close aria-label="关闭"><Svg w={13} h={11}><path d="M2 1.500l9 8M11 1.500l-9 8" stroke="#5c3030" strokeWidth="4.500" /><path d="M2 1.500l9 8M11 1.500l-9 8" stroke="#fff" strokeWidth="2.800" /></Svg></CaptionButton>
        </CaptionButtons>
      </TitleBar>

      <TabStrip>
        <TabIcon><ExcelMark /></TabIcon>
        {TABS.map((t, i) => <RibbonTab key={t} $active={i === 0}>{t}</RibbonTab>)}
        <DocButtons>
          <button aria-label="帮助"><Svg w={14}><circle cx="7" cy="7" r="6.500" fill="#2b62c8" stroke="#7d9fd4" /><circle cx="7" cy="7" r="5.500" stroke="#e8f0fc" /><text x="7" y="10.500" textAnchor="middle" fontFamily="Liberation Sans" fontWeight="bold" fontSize="10" fill="#fff">?</text></Svg></button>
          <button aria-label="最小化窗口"><Svg w={10} h={12}><path d="M2 9h7" stroke="#5d6f8b" strokeWidth="2" /></Svg></button>
          <button aria-label="还原窗口"><Svg w={14} h={12}><path d="M3.500 4V2.500h8v5H10M1.500 4.500h8v5h-8zM1 5h9" stroke="#5d6f8b" /></Svg></button>
          <button aria-label="关闭窗口"><Svg w={14} h={12}><path d="M3 2.500l7 7M10 2.500l-7 7" stroke="#6a7c98" strokeWidth="2" /></Svg></button>
        </DocButtons>
      </TabStrip>

      <Ribbon>
        <Group label="剪贴板" w={112} launch>
          <Big icon={<Clipboard />} lines={["粘贴"]} w={43} />
          <ClipStack>
            <SmallButton><Cut />剪切</SmallButton>
            <SmallButton><Copy />复制</SmallButton>
            <SmallButton><Brush />格式刷</SmallButton>
          </ClipStack>
        </Group>

        <Group label="字体" w={234} launch>
          <Stack $gap={10} $top={11}>
            <Line>
              <Line $gap={0}>
                <Combo w={131} label="字体" value="宋体" />
                <Combo w={46} label="字号" value="20" />
              </Line>
              <ButtonSet>
                <SetButton $first $w={21} $font='bold 16px/18px "Liberation Serif"' aria-label="增大字号">A<Svg w={5} h={12}><path d="M0 3h5L2.500 0z" fill="#3358b5" /></Svg></SetButton>
                <SetButton $w={21} $font='bold 12px/18px "Liberation Serif"' aria-label="减小字号">A<Svg w={5} h={12}><path d="M0 0h5L2.500 3z" fill="#3358b5" /></Svg></SetButton>
              </ButtonSet>
            </Line>
            <Line>
              <ButtonSet>
                <SetButton $first $font='bold 14px/18px "Liberation Serif"'>B</SetButton>
                <SetButton $font='italic bold 14px/18px "Liberation Serif"'>I</SetButton>
                <SetButton $w={31} $font='bold 14px/18px "Liberation Serif"'><u>U</u><Caret /></SetButton>
              </ButtonSet>
              <ButtonSet><SetButton $first $w={32} aria-label="边框"><Borders /><Caret /></SetButton></ButtonSet>
              <ButtonSet>
                <SetButton $first $w={32} aria-label="填充颜色"><Bucket /><Caret /></SetButton>
                <SetButton $w={32} aria-label="字体颜色"><FontColor /><Caret /></SetButton>
              </ButtonSet>
              <ButtonSet><SetButton $first $w={32} aria-label="拼音"><Pinyin /><Caret /></SetButton></ButtonSet>
            </Line>
          </Stack>
        </Group>

        <Group label="对齐方式" w={229} launch>
          <Stack $gap={11} $top={12}>
            <Line>
              <ButtonSet>
                <SetButton $first $w={22} aria-label="顶端对齐"><AlignLines rows={4} top={0} /></SetButton>
                <SetButton $on aria-label="垂直居中"><AlignLines rows={4} top={3} /></SetButton>
                <SetButton $w={22} aria-label="底端对齐"><AlignLines rows={4} top={6} /></SetButton>
              </ButtonSet>
              <ButtonSet><SetButton $first $w={30} aria-label="方向"><Orient /><Caret /></SetButton></ButtonSet>
            </Line>
            <Line>
              <ButtonSet>
                <SetButton $first $w={22} aria-label="左对齐"><AlignLines kind="left" /></SetButton>
                <SetButton aria-label="居中"><AlignLines /></SetButton>
                <SetButton $w={22} aria-label="右对齐"><AlignLines kind="right" /></SetButton>
              </ButtonSet>
              <ButtonSet>
                <SetButton $first $w={21} aria-label="减少缩进量"><Indent out /></SetButton>
                <SetButton $w={21} aria-label="增加缩进量"><Indent /></SetButton>
              </ButtonSet>
            </Line>
          </Stack>
          <VRule />
          <Stack $gap={11} $top={12}>
            <SmallButton><Wrap />自动换行</SmallButton>
            <SmallButton><Merge />合并后居中<Caret /></SmallButton>
          </Stack>
        </Group>

        <Group label="数字" w={136} launch>
          <Stack $gap={10} $top={11}>
            <Combo w={128} label="数字格式" value="常规" />
            <Line $gap={3}>
              <ButtonSet>
                <SetButton $first $w={33} aria-label="会计数字格式"><Currency /><Caret /></SetButton>
                <SetButton $w={24}>%</SetButton>
                <SetButton $w={22} $font='bold 16px/18px "Liberation Serif"'>,</SetButton>
              </ButtonSet>
              <ButtonSet>
                <SetButton $first $w={21} aria-label="增加小数位数"><Decimals top=".0" bottom=".00" dir="l" /></SetButton>
                <SetButton $w={21} aria-label="减少小数位数"><Decimals top=".00" bottom=".0" dir="r" /></SetButton>
              </ButtonSet>
            </Line>
          </Stack>
        </Group>

        <Group label="样式" w={356}>
          <Big icon={<CondFormat />} lines={["条件格式"]} w={52} />
          <Big icon={<TableFormat />} lines={["套用", "表格格式"]} w={61} />
          <Gallery>
            <StyleCell $on $bg="#fff" $fg="#000" aria-label="常规" />
            <StyleCell $bg="#ffc7ce" $fg="#9c0006" aria-label="差" />
            <StyleCell $bg="#c6efce" $fg="#006100">好</StyleCell>
            <StyleCell $bg="#ffeb9c" $fg="#9c6500">适中</StyleCell>
          </Gallery>
          <GallerySpin>
            <SpinButton $off aria-label="上一行"><Arrow dir="u" color="#a5a9af" /></SpinButton>
            <SpinButton aria-label="下一行"><Caret /></SpinButton>
            <SpinButton aria-label="其他"><Svg w={7} h={7}><path d="M0 .5h7" stroke="#4d76b3" /><path d="M0 3h7L3.500 6z" fill="#4d76b3" /></Svg></SpinButton>
          </GallerySpin>
        </Group>

        <Group label="单元格" w={134}>
          <Big icon={<InsertCells />} lines={["插入"]} />
          <Big icon={<DeleteCells />} lines={["删除"]} />
          <Big icon={<FormatCells />} lines={["格式"]} />
        </Group>

        <Group label="编辑" w={176}>
          <EditStack>
            <SmallButton><IconSlot><Sigma /></IconSlot>自动求和<Caret /></SmallButton>
            <SmallButton><IconSlot><Fill /></IconSlot>填充<Caret /></SmallButton>
            <SmallButton><IconSlot><Eraser /></IconSlot>清除<Caret /></SmallButton>
          </EditStack>
          <Big icon={<SortFilter />} lines={["排序和", "筛选"]} />
          <Big icon={<Binoculars />} lines={["查找和", "选择"]} />
        </Group>
      </Ribbon>

      <FormulaBar>
        <NameBox><NameInput aria-label="名称框" defaultValue="C1" /><Caret color="#000" w={8} /></NameBox>
        <FxPill aria-label="插入函数"><FxDot /><span>fx</span></FxPill>
        <FormulaInput aria-label="编辑栏" />
        <ExpandButton aria-label="展开编辑栏"><Svg w={8} h={10}><path d="M1 1l3 3 3-3M1 5l3 3 3-3" stroke="#000" strokeWidth="1.500" /></Svg></ExpandButton>
      </FormulaBar>

      <Workbook>
        <SheetPane>
          <Sheet>
            <thead>
              <tr>
                <Corner aria-label="全选" />
                {COLUMNS.map((c) => <ColHead key={c} $on={c === "C"}>{c}</ColHead>)}
              </tr>
            </thead>
            <tbody>
              {ROWS.map((r, ri) => (
                <tr key={ri}>
                  <RowHead $on={ri === 0}>{r}</RowHead>
                  {COLUMNS.map((c, ci) => {
                    const ruled = ri < 5 && ci < 9;
                    return (
                      <Cell key={c} $ruled={ruled}>
                        {ruled && <RiceGrid />}
                        {ri === 0 && ci === 0 && <Selection />}
                        {ri === 4 && ci === 8 && (
                          <FillOptions aria-label="自动填充选项"><Svg w={17} h={17}><path d="M2 2h6v4H2z" fill="#aaaedc" /><path d="M2.500 6.500h6v4h-6z" stroke="#9a9ed4" /><path d="M2 13h9" stroke="#999" strokeDasharray="1 1" /><path d="M8.500 12V3h6v3h-5" stroke="#1b1b8a" strokeWidth="1.300" /><path d="M13.500 9v6M10.500 12h6" stroke="#000" strokeWidth="1.400" /></Svg></FillOptions>
                        )}
                      </Cell>
                    );
                  })}
                </tr>
              ))}
            </tbody>
          </Sheet>
          <Watermark width="322" height="126" viewBox="1099 696 322 126" aria-hidden="true">
            <g fill="#fff" fillOpacity=".75" stroke="#d9d9d9" strokeWidth="1.500">
              <ellipse cx="1199" cy="734" rx="10" ry="13" />
              <ellipse cx="1217" cy="716" rx="10" ry="13" />
              <ellipse cx="1240" cy="718" rx="10" ry="13" />
              <ellipse cx="1254" cy="740" rx="10" ry="12" />
              <path d="M1226 736q-10 0-15 11-4 7-12 13-9 8-5 17 5 9 18 7 14-3 26 0 17 3 20-9 1-9-9-18-6-6-10-13-5-8-13-8z" />
              <g fontFamily="Liberation Sans" fontWeight="bold">
                <text x="1101" y="783" fontSize="58">Bai</text>
                <text x="1209" y="777" fontSize="34">du</text>
              </g>
              <text x="1267" y="779" fontSize="44" fontWeight="bold" fontFamily="Noto Sans CJK SC">经验</text>
              <text x="1104" y="816" fontSize="30" strokeWidth="1.200" fontFamily="Open Sans">jingyan.baidu.com</text>
            </g>
          </Watermark>
        </SheetPane>
        <VScroll>
          <SplitBox $v />
          <ArrowButton aria-label="向上"><Arrow dir="u" color="#3d4f73" /></ArrowButton>
          <VThumb aria-label="垂直滚动"><Svg w={8} h={8}><path d="M0 .5h8M0 2.500h8M0 4.500h8M0 6.500h8" stroke="#7a8391" /></Svg></VThumb>
          <ArrowButton $end aria-label="向下"><Arrow dir="d" color="#3d4f73" /></ArrowButton>
        </VScroll>
      </Workbook>

      <BottomBar>
        <SheetNav>
          <button aria-label="第一张"><Arrow dir="l" bar="l" /></button>
          <button aria-label="上一张"><Arrow dir="l" /></button>
          <button aria-label="下一张"><Arrow dir="r" /></button>
          <button aria-label="最后一张"><Arrow dir="r" bar="r" /></button>
        </SheetNav>
        <SheetTab $w={69}>Sheet1</SheetTab>
        <SheetTab $w={68}>Sheet2</SheetTab>
        <SheetTab $w={69} $active>Sheet3</SheetTab>
        <SheetTab $w={43} $icon aria-label="插入工作表"><Svg w={16} h={12}><path d="M4.500 2.500h9v7l-2 2h-7z" fill="#f3f6fb" stroke="#68788f" /><path d="M4 0v7M.5 3.500h7M1.500 1l5 5M6.500 1l-5 5" stroke="#e0962c" /></Svg></SheetTab>
        <HScroll>
          <SplitBox />
          <ArrowButton aria-label="向左"><Arrow dir="l" color="#3d4f73" /></ArrowButton>
          <Track><HThumb aria-label="水平滚动"><Svg w={8} h={8}><path d="M.5 0v8M2.500 0v8M4.500 0v8M6.500 0v8" stroke="#7a8391" /></Svg></HThumb></Track>
          <ArrowButton aria-label="向右"><Arrow dir="r" color="#3d4f73" /></ArrowButton>
          <SplitBox />
        </HScroll>
      </BottomBar>

      <StatusBar>
        <StatusItem>就绪</StatusItem>
        <StatusItem><Svg w={16} h={13}><path d="M1.500 1.500h14v11h-14z" fill="#fff" stroke="#3b63a6" /><path d="M2 2h13v3H2z" fill="#5b8be0" /><path d="M4 7.500h10M4 10.500h10" stroke="#9a9fb0" strokeDasharray="3 1" /><circle cx="3" cy="3" r="3" fill="#d9412c" /></Svg></StatusItem>
        <StatusRight>
          <ViewButtons>
            <ViewButton $on aria-label="普通"><Svg w={13}><path d="M.5 1.500h12v10H.5zM.5 5h12M.5 8h12M4.500 2v9M8.500 2v9" fill="#fff" stroke="#555" /></Svg></ViewButton>
            <ViewButton aria-label="页面布局"><Svg w={13}><path d="M1 1h11v11H1z" fill="#8a8f98" stroke="#555" /><path d="M3.500 3h6v7.500h-6z" fill="#fff" /></Svg></ViewButton>
            <ViewButton aria-label="分页预览"><Svg w={13}><path d="M.5 1.500h12v10H.5z" fill="#8a8f98" stroke="#555" /><path d="M1 2h3v6H1zM6 2h3v6H6zM10 2h2v9h-2z" fill="#fff" /></Svg></ViewButton>
          </ViewButtons>
          <span>100%</span>
          <button aria-label="缩小"><ZoomKnob /></button>
          <ZoomSlider type="range" min="0" max="100" defaultValue="50" aria-label="显示比例" />
          <button aria-label="放大"><ZoomKnob plus /></button>
        </StatusRight>
      </StatusBar>

      <Banner>怎样快速在<BannerLatin>EXCEL</BannerLatin>中制作米字格</Banner>

      <SpeedBall>
        <Pill>
          <Rates>
            <Rate><Svg w={8}><path d="M4 0l4 4H5.200v4H2.800V4H0z" fill="#e8583c" /></Svg>0K/s</Rate>
            <Rate><Svg w={8}><path d="M4 8l4-4H5.200V0H2.800v4H0z" fill="#149a4a" /></Svg>0K/s</Rate>
          </Rates>
          <Plus />
        </Pill>
        <Ball>85%</Ball>
      </SpeedBall>
    </Window>
  );
}
